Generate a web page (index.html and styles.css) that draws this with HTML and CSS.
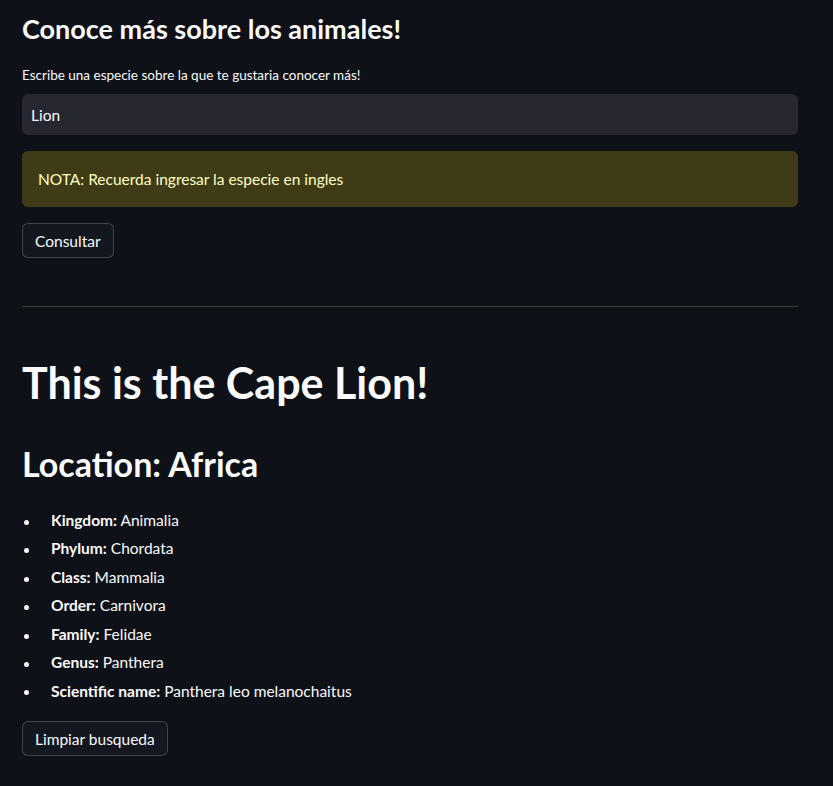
FILE: index.html
```html
<!DOCTYPE html>
<html lang="es">
<head>
<meta charset="utf-8">
<title>Conoce más sobre los animales</title>
<link rel="stylesheet" href="styles.css">
</head>
<body>
<main class="main">
  <h3 class="subheader">Conoce más sobre los animales!</h3>
  <label class="label" for="species">Escribe una especie sobre la que te gustaria conocer más!</label>
  <div class="input-wrap"><input id="species" class="input" type="text" value="Lion"></div>
  <div class="alert">NOTA: Recuerda ingresar la especie en ingles</div>
  <div class="btn-row"><button class="btn">Consultar</button></div>
  <hr class="divider">
  <h1 class="title">This is the Cape Lion!</h1>
  <h2 class="location">Location: Africa</h2>
  <ul class="facts">
    <li><strong>Kingdom:</strong> Animalia</li>
    <li><strong>Phylum:</strong> Chordata</li>
    <li><strong>Class:</strong> Mammalia</li>
    <li><strong>Order:</strong> Carnivora</li>
    <li><strong>Family:</strong> Felidae</li>
    <li><strong>Genus:</strong> Panthera</li>
    <li><strong>Scientific name:</strong> Panthera leo melanochaitus</li>
  </ul>
  <div class="btn-row btn-row-last"><button class="btn">Limpiar busqueda</button></div>
</main>
</body>
</html>
```

FILE: styles.css
```css
html, body {
  margin: 0;
  padding: 0;
  background: #0e1117;
  color: #fafafa;
  font-family: Lato, "Liberation Sans", sans-serif;
}

.main {
  width: 776px;
  padding: 12px 0 30px 22px;
  display: flex;
  flex-direction: column;
}

.subheader {
  margin: 0;
  font-size: 27px;
  font-weight: 700;
  line-height: 34px;
}

.label {
  margin-top: 20px;
  font-size: 13.5px;
  line-height: 18px;
}

.input-wrap {
  margin-top: 10px;
}

.input {
  box-sizing: border-box;
  width: 100%;
  height: 41px;
  border: none;
  border-radius: 6px;
  background: #262730;
  color: #fafafa;
  font-family: inherit;
  font-size: 15.5px;
  padding: 0 9px;
  outline: none;
}

.alert {
  margin-top: 16px;
  box-sizing: border-box;
  height: 56px;
  display: flex;
  align-items: center;
  padding: 0 16px;
  border-radius: 6px;
  background: #3e3b16;
  color: #ffffc2;
  font-size: 15.5px;
}

.btn-row {
  margin-top: 16px;
  display: flex;
}

.btn-row-last {
  margin-top: 14px;
}

.btn {
  height: 35px;
  padding: 0 12px;
  border: 1px solid rgba(250, 250, 250, 0.2);
  border-radius: 6px;
  background: #131720;
  color: #fafafa;
  font-family: inherit;
  font-size: 15.5px;
}

.divider {
  width: 100%;
  margin: 48px 0 0 0;
  border: none;
  border-top: 1px solid rgba(250, 250, 250, 0.2);
  height: 0;
}

.title {
  margin: 50px 0 0 0;
  font-size: 43px;
  font-weight: 700;
  line-height: 52px;
}

.location {
  margin: 34px 0 0 0;
  font-size: 34px;
  font-weight: 700;
  line-height: 42px;
}

.facts {
  margin: 23px 0 0 0;
  padding-left: 29px;
  list-style: none;
  font-size: 15.5px;
}

.facts li {
  line-height: 25.3px;
  margin-bottom: 3.2px;
}

.facts li::before {
  content: "";
  display: inline-block;
  width: 5px;
  height: 5px;
  border-radius: 50%;
  background: #fafafa;
  vertical-align: middle;
  margin-left: -27px;
  margin-right: 22px;
}

.facts strong {
  font-weight: 700;
}
```
